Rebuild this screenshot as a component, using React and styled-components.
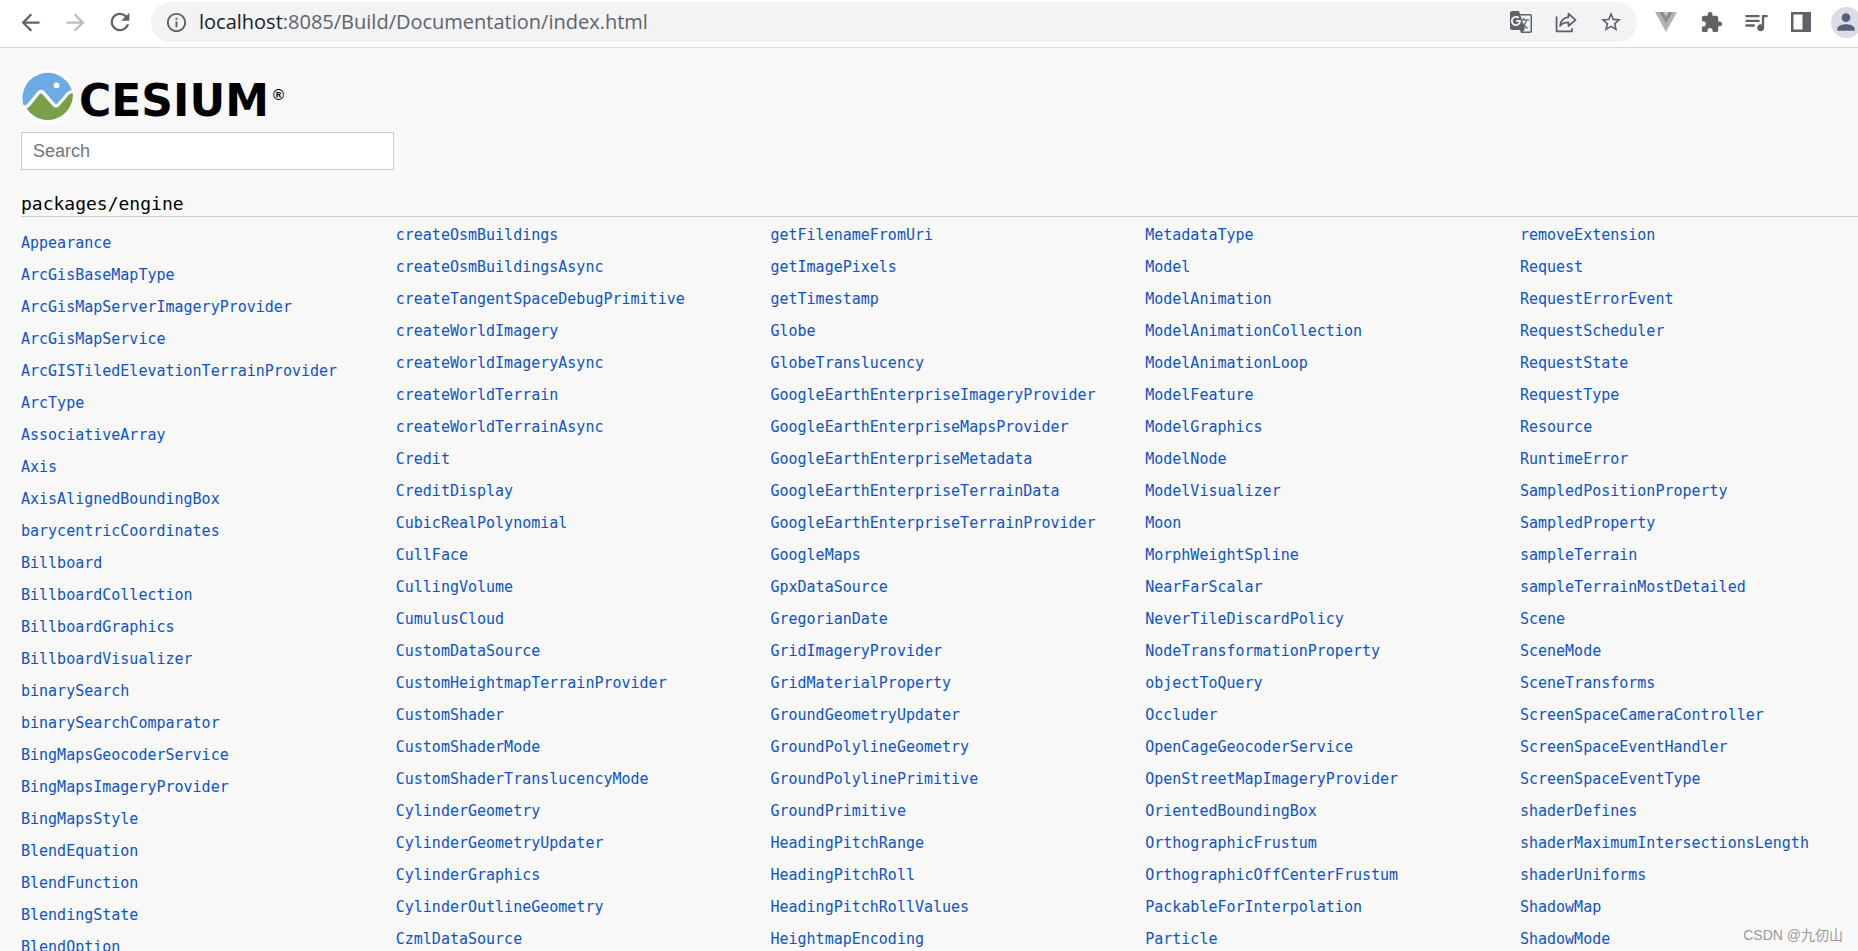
import React, { useState } from "react";
import styled, { createGlobalStyle } from "styled-components";
import {
  MdArrowBack,
  MdArrowForward,
  MdRefresh,
  MdInfoOutline,
  MdGTranslate,
  MdStarBorder,
  MdExtension,
  MdQueueMusic,
  MdPerson,
} from "react-icons/md";

const columns = [
  [
    "Appearance",
    "ArcGisBaseMapType",
    "ArcGisMapServerImageryProvider",
    "ArcGisMapService",
    "ArcGISTiledElevationTerrainProvider",
    "ArcType",
    "AssociativeArray",
    "Axis",
    "AxisAlignedBoundingBox",
    "barycentricCoordinates",
    "Billboard",
    "BillboardCollection",
    "BillboardGraphics",
    "BillboardVisualizer",
    "binarySearch",
    "binarySearchComparator",
    "BingMapsGeocoderService",
    "BingMapsImageryProvider",
    "BingMapsStyle",
    "BlendEquation",
    "BlendFunction",
    "BlendingState",
    "BlendOption",
  ],
  [
    "createOsmBuildings",
    "createOsmBuildingsAsync",
    "createTangentSpaceDebugPrimitive",
    "createWorldImagery",
    "createWorldImageryAsync",
    "createWorldTerrain",
    "createWorldTerrainAsync",
    "Credit",
    "CreditDisplay",
    "CubicRealPolynomial",
    "CullFace",
    "CullingVolume",
    "CumulusCloud",
    "CustomDataSource",
    "CustomHeightmapTerrainProvider",
    "CustomShader",
    "CustomShaderMode",
    "CustomShaderTranslucencyMode",
    "CylinderGeometry",
    "CylinderGeometryUpdater",
    "CylinderGraphics",
    "CylinderOutlineGeometry",
    "CzmlDataSource",
  ],
  [
    "getFilenameFromUri",
    "getImagePixels",
    "getTimestamp",
    "Globe",
    "GlobeTranslucency",
    "GoogleEarthEnterpriseImageryProvider",
    "GoogleEarthEnterpriseMapsProvider",
    "GoogleEarthEnterpriseMetadata",
    "GoogleEarthEnterpriseTerrainData",
    "GoogleEarthEnterpriseTerrainProvider",
    "GoogleMaps",
    "GpxDataSource",
    "GregorianDate",
    "GridImageryProvider",
    "GridMaterialProperty",
    "GroundGeometryUpdater",
    "GroundPolylineGeometry",
    "GroundPolylinePrimitive",
    "GroundPrimitive",
    "HeadingPitchRange",
    "HeadingPitchRoll",
    "HeadingPitchRollValues",
    "HeightmapEncoding",
  ],
  [
    "MetadataType",
    "Model",
    "ModelAnimation",
    "ModelAnimationCollection",
    "ModelAnimationLoop",
    "ModelFeature",
    "ModelGraphics",
    "ModelNode",
    "ModelVisualizer",
    "Moon",
    "MorphWeightSpline",
    "NearFarScalar",
    "NeverTileDiscardPolicy",
    "NodeTransformationProperty",
    "objectToQuery",
    "Occluder",
    "OpenCageGeocoderService",
    "OpenStreetMapImageryProvider",
    "OrientedBoundingBox",
    "OrthographicFrustum",
    "OrthographicOffCenterFrustum",
    "PackableForInterpolation",
    "Particle",
  ],
  [
    "removeExtension",
    "Request",
    "RequestErrorEvent",
    "RequestScheduler",
    "RequestState",
    "RequestType",
    "Resource",
    "RuntimeError",
    "SampledPositionProperty",
    "SampledProperty",
    "sampleTerrain",
    "sampleTerrainMostDetailed",
    "Scene",
    "SceneMode",
    "SceneTransforms",
    "ScreenSpaceCameraController",
    "ScreenSpaceEventHandler",
    "ScreenSpaceEventType",
    "shaderDefines",
    "shaderMaximumIntersectionsLength",
    "shaderUniforms",
    "ShadowMap",
    "ShadowMode",
  ],
];

const App = () => {
  const [search, setSearch] = useState("");
  const term = search.toLowerCase();

  return (
    <Page>
      <GlobalStyle />
      <Toolbar>
        <NavButtons>
          <IconButton aria-label="Back">
            <MdArrowBack size={27} />
          </IconButton>
          <IconButton aria-label="Forward" disabled>
            <MdArrowForward size={27} />
          </IconButton>
          <IconButton aria-label="Reload">
            <MdRefresh size={28} />
          </IconButton>
        </NavButtons>
        <AddressBar>
          <MdInfoOutline size={23} />
          <Url>
            <span>localhost</span>:8085/Build/Documentation/index.html
          </Url>
          <IconGroup>
            <IconButton aria-label="Translate">
              <MdGTranslate size={24} />
            </IconButton>
            <IconButton aria-label="Share">
              <ShareIcon />
            </IconButton>
            <IconButton aria-label="Bookmark">
              <MdStarBorder size={24} />
            </IconButton>
          </IconGroup>
        </AddressBar>
        <Extensions>
          <IconButton aria-label="Vue devtools">
            <VueIcon />
          </IconButton>
          <IconButton aria-label="Extensions">
            <MdExtension size={23} />
          </IconButton>
          <IconButton aria-label="Media">
            <MdQueueMusic size={28} />
          </IconButton>
          <IconButton aria-label="Side panel">
            <PanelIcon />
          </IconButton>
          <IconButton aria-label="Profile">
            <Avatar>
              <MdPerson size={26} />
            </Avatar>
          </IconButton>
        </Extensions>
      </Toolbar>
      <Content>
        <Logo href="#">
          <Globe />
          <Wordmark>CESIUM</Wordmark>
          <Registered>®</Registered>
        </Logo>
        <SearchBox
          type="text"
          placeholder="Search"
          aria-label="Search"
          value={search}
          onChange={(e) => setSearch(e.target.value)}
        />
        <Heading>packages/engine</Heading>
        <Columns>
          {columns.map((names) => (
            <Column key={names[0]}>
              {names
                .filter((name) => name.toLowerCase().includes(term))
                .map((name) => (
                  <li key={name}>
                    <ClassLink href={`#${name}`}>{name}</ClassLink>
                  </li>
                ))}
            </Column>
          ))}
        </Columns>
      </Content>
      <Watermark>CSDN @九仞山</Watermark>
    </Page>
  );
};

//Icons
const ShareIcon = () => (
  <svg width="24" height="24" viewBox="0 0 24 24" fill="none" stroke="currentColor" strokeWidth="1.8">
    <path d="M2.6 6.5v14.9h15.4v-3.2" />
    <path d="M14.5 3.6l7 6.2-7 6.2v-3.6c-3.8 0-6.600 1.1-8.4 3.7.5-4.7 3.3-8.3 8.400-8.900z" strokeLinejoin="round" />
  </svg>
);

const VueIcon = () => (
  <svg width="24" height="24" viewBox="0 0 24 24">
    <path d="M1 2h8.5L12 6l2.5-4H23L12 22z" fill="#b2b2b2" />
    <path d="M5.4 2h4.2L12 6l2.4-4h4.2L12 13.6z" fill="#8c8c8c" />
    <path d="M9.3 2h5.4L12 6.6z" fill="#c4c4c4" />
  </svg>
);

const PanelIcon = () => (
  <svg width="24" height="24" viewBox="0 0 24 24">
    <path d="M2 2h20v20H2zM4.500 4.500v15h9v-15z" fill="currentColor" fillRule="evenodd" />
  </svg>
);

const Globe = () => (
  <svg width="54" height="54" viewBox="0 0 54 54">
    <circle cx="27" cy="27" r="27" fill="#fff" />
    <path
      d="M2.6 35.5A25.2 25.2 0 1 1 50.8 20.5C47.6 20.5 45 22.5 43 26L36 33.8Q35 34.6 34 33.6L23 21Q20 18.5 17 21L6.5 34Q4.5 36 2.6 35.5z"
      fill="#6dabe4"
    />
    <path
      d="M5.5 38.3C7.5 37.8 8.5 36.5 10 34.7L18.5 24.2Q20 22.8 21.5 24.2L32 36.3Q35 39 38 36.3L45.5 27.5C47.5 24.5 49 23.3 51.8 23.3A25.1 25.1 0 0 1 5.5 38.3z"
      fill="#7b9e49"
    />
    <circle cx="35.5" cy="15.3" r="2.9" fill="#fff" />
  </svg>
);

const GlobalStyle = createGlobalStyle`
  * {
    box-sizing: border-box;
  }
  body {
    margin: 0;
    background: #f8f8f8;
    font-family: "Liberation Sans", Arial, sans-serif;
  }
`;

const Page = styled.div`
  position: relative;
  height: 100vh;
  overflow: hidden;
`;

const Toolbar = styled.header`
  display: flex;
  align-items: center;
  padding: 2px 0 5px 12px;
  background: #fff;
  border-bottom: 1px solid #d9dadc;
  color: #5f6368;
`;

const IconGroup = styled.div`
  display: flex;
  gap: 9px;
`;

const NavButtons = styled(IconGroup)`
  margin-right: 13px;
`;

const Extensions = styled(IconGroup)`
  margin: 0 -6px 0 11px;
`;

const IconButton = styled.button`
  display: flex;
  align-items: center;
  justify-content: center;
  width: 36px;
  height: 36px;
  padding: 0;
  border: none;
  border-radius: 50%;
  background: none;
  color: inherit;
  cursor: pointer;
  &:disabled {
    color: #babcbe;
    cursor: default;
  }
`;

const AddressBar = styled.div`
  display: flex;
  flex: 1;
  align-items: center;
  gap: 11px;
  height: 40px;
  padding: 0 8px 0 14px;
  border-radius: 20px;
  background: #f1f3f4;
`;

const Url = styled.div`
  flex: 1;
  font-family: "Open Sans", "Noto Sans", sans-serif;
  font-size: 20px;
  line-height: 28px;
  span {
    color: #202124;
  }
`;

const Avatar = styled.span`
  display: flex;
  align-items: center;
  justify-content: center;
  width: 31px;
  height: 31px;
  border-radius: 50%;
  background: #dadde4;
  color: #55607a;
`;

const Content = styled.main`
  padding: 21px 0 0 21px;
`;

const Logo = styled.a`
  display: flex;
  align-items: center;
  width: max-content;
  height: 56px;
  color: #000;
  text-decoration: none;
`;

const Wordmark = styled.span`
  margin: 7px 4px 0;
  font-family: "DejaVu Sans", sans-serif;
  font-size: 44px;
  font-weight: bold;
  line-height: 48px;
`;

const Registered = styled.span`
  font-size: 15px;
  font-weight: bold;
  line-height: 20px;
  padding-bottom: 4px;
`;

const SearchBox = styled.input`
  display: block;
  width: 373px;
  height: 38px;
  margin-top: 7px;
  padding: 0 11px;
  border: 1px solid #ccc;
  border-radius: 0;
  background: #fff;
  color: #333;
  font-family: inherit;
  font-size: 18px;
  &::placeholder {
    color: #757575;
  }
`;

const Heading = styled.h1`
  margin: 22px 0 0;
  border-bottom: 1px solid #c8c8c8;
  color: #000;
  font-family: "DejaVu Sans Mono", monospace;
  font-size: 18px;
  font-weight: normal;
  line-height: 24px;
`;

const Columns = styled.div`
  display: grid;
  grid-template-columns: repeat(5, 20.4%);
`;

const Column = styled.ul`
  margin: 0;
  padding: 2px 0 0;
  list-style: none;
  &:first-child {
    padding-top: 10px;
  }
  li {
    height: 32px;
    line-height: 32px;
  }
`;

const ClassLink = styled.a`
  color: #0d53c4;
  font-family: "DejaVu Sans Mono", monospace;
  font-size: 15px;
  text-decoration: none;
  &:hover {
    text-decoration: underline;
  }
`;

const Watermark = styled.div`
  position: absolute;
  right: 15px;
  bottom: 6px;
  color: #999;
  font-family: "Liberation Sans", "Noto Sans CJK SC", sans-serif;
  font-size: 14px;
  line-height: 20px;
`;

export default App;
